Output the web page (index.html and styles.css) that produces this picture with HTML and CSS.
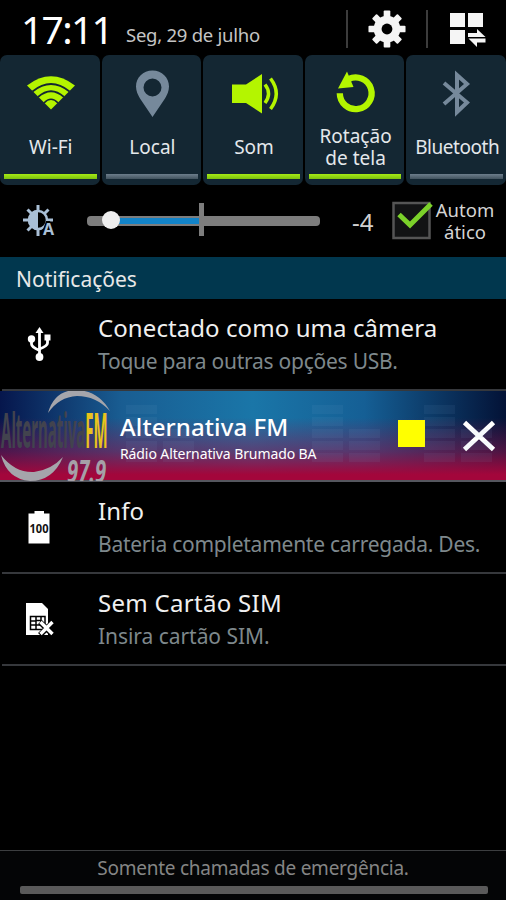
FILE: index.html
```
<!DOCTYPE html>
<html lang="pt-BR">
<head>
    <meta charset="UTF-8">
    <meta name="viewport" content="width=device-width, initial-scale=1.0">
    <title>Notificações</title>
    <link rel="stylesheet" href="styles.css">
</head>
<body>
    <header class="status">
        <span class="clock">17:11</span>
        <span class="date">Seg, 29 de julho</span>
        <div class="actions">
            <svg class="gear" width="38" height="40" viewBox="0 0 38 40">
                <g fill="#f5f5f5">
                    <rect x="15.5" y="0.5" width="7" height="39" rx="1"/>
                    <rect x="-0.5" y="16.5" width="39" height="7" rx="1"/>
                    <g transform="rotate(45 19 20)">
                        <rect x="15.5" y="1" width="7" height="38" rx="1"/>
                        <rect x="0" y="16.5" width="38" height="7" rx="1"/>
                    </g>
                    <circle cx="19" cy="20" r="14"/>
                </g>
                <circle cx="19" cy="20" r="5.7" fill="#000"/>
            </svg>
            <svg class="panels" width="36" height="36" viewBox="0 0 36 36" fill="#f5f5f5">
                <rect x="0" y="1" width="15" height="14"/>
                <rect x="18" y="1" width="15" height="14"/>
                <rect x="0" y="18" width="15" height="14"/>
                <path d="M18 25V21H27V17L35.5 25Z"/>
                <path d="M35.500 26.500V30.500H27V35L18.500 26.500Z"/>
            </svg>
        </div>
    </header>

    <section class="toggles">
        <div class="toggle on">
            <svg width="48" height="48" viewBox="0 0 48 48">
                <path fill="#b4f500" d="M25 38.500L1 14.500Q25 -4 49 14.500Z"/>
                <g fill="none" stroke="#142733" stroke-width="1.700">
                    <path d="M6.500 20.500Q25 5.500 43.500 20.500"/>
                    <path d="M12 26Q25 14.500 38 26"/>
                    <path d="M18 32Q25 24.500 32 32"/>
                </g>
            </svg>
            <div class="label">Wi-Fi</div>
        </div>
        <div class="toggle">
            <svg width="48" height="48" viewBox="0 0 48 48">
                <path fill="#76899b" fill-rule="evenodd" d="M24.500 -0.500C15 -0.500 8 6.500 8 15.500C8 20 10 24 12 27.500L24.500 46L37 27.500C39 24 41 20 41 15.500C41 6.500 34 -0.500 24.500 -0.500ZM24.500 7.500A9 9 0 1 1 24.500 25.500A9 9 0 1 1 24.500 7.500Z"/>
            </svg>
            <div class="label">Local</div>
        </div>
        <div class="toggle on">
            <svg width="48" height="48" viewBox="0 0 48 48">
                <path fill="#b4f500" d="M3 13.500H17L33 3V42.500L17 32H3Z"/>
                <g fill="none" stroke="#b4f500" stroke-width="3.500">
                    <path d="M36 13.500Q43 22.500 36 32"/>
                    <path d="M41.500 7.500Q53 22.500 41.500 38"/>
                </g>
            </svg>
            <div class="label">Som</div>
        </div>
        <div class="toggle on">
            <svg width="48" height="48" viewBox="0 0 48 48">
                <path fill="none" stroke="#b4f500" stroke-width="6.300" d="M8.800 22.300A15.900 15.900 0 1 0 17.500 8.100"/>
                <path fill="#b4f500" d="M16 0.500L22.500 16L7 17.500Z"/>
            </svg>
            <div class="label">Rotação<br>de tela</div>
        </div>
        <div class="toggle">
            <svg width="48" height="48" viewBox="0 0 48 48">
                <path fill="none" stroke="#76899b" stroke-width="4" d="M11 12L34 31.500L24 41V4L34 13L11 33"/>
            </svg>
            <div class="label tight">Bluetooth</div>
        </div>
    </section>

    <section class="brightness">
        <svg class="sun" width="34" height="34" viewBox="0 0 34 34">
            <path stroke="#a9bfd6" stroke-width="3" d="M15 1V8M0 16H8M15 24V32M24 16H30M4.500 5.500L9 10M4.500 26.500L9 22M25.500 5.500L21 10"/>
            <circle cx="15" cy="16" r="9" fill="#000" stroke="#a9bfd6" stroke-width="2.500"/>
            <path d="M15 6A10 10 0 0 0 15 26Z" fill="#a9bfd6"/>
            <path d="M17 34L23 17H27L34 34Z" fill="#000"/>
            <text class="sun-letter" x="20" y="31">A</text>
        </svg>
        <div class="slider">
            <div class="fill"></div>
            <div class="tick"></div>
            <div class="knob"></div>
        </div>
        <span class="level">-4</span>
        <svg class="check" width="42" height="40" viewBox="0 0 42 40">
            <rect x="1.500" y="2" width="36" height="35" fill="#121314" stroke="#555" stroke-width="2.500"/>
            <path d="M7 13.500L18 24L39 3" fill="none" stroke="#7bd12a" stroke-width="5"/>
        </svg>
        <span class="auto">Autom<br>ático</span>
    </section>

    <h2 class="heading">Notificações</h2>

    <main class="list">
        <div class="item">
            <div class="icon">
                <svg width="24" height="34" viewBox="0 0 24 34">
                    <path fill="none" stroke="#fff" stroke-width="2.800" d="M12.500 5V30M4.500 13V17Q4.500 20 12.500 23.500M20.500 11V16Q20.500 19 12.500 22"/>
                    <path fill="#fff" d="M12.500 0L16.500 6H8.500Z"/>
                    <circle cx="4.500" cy="12" r="3.700" fill="#fff"/>
                    <rect x="17.500" y="7.500" width="6" height="6" fill="#fff"/>
                    <circle cx="12.500" cy="30" r="3.900" fill="#fff"/>
                </svg>
            </div>
            <div class="text">
                <div class="title">Conectado como uma câmera</div>
                <div class="sub">Toque para outras opções USB.</div>
            </div>
        </div>

        <div class="radio">
            <svg class="bars" width="506" height="90" viewBox="0 0 506 90" fill="#8fb4d8">
                <g id="bar">
                    <rect x="126" y="14" width="31" height="9"/>
                    <rect x="126" y="26" width="31" height="9"/>
                    <rect x="126" y="38" width="31" height="9"/>
                    <rect x="126" y="50" width="31" height="9"/>
                    <rect x="126" y="62" width="31" height="9"/>
                    <rect x="163" y="38" width="31" height="9"/>
                    <rect x="163" y="50" width="31" height="9"/>
                    <rect x="163" y="62" width="31" height="9"/>
                </g>
                <use href="#bar" x="186"/>
                <use href="#bar" x="298"/>
            </svg>
            <svg class="logo" width="112" height="90" viewBox="0 0 112 90">
                <path fill="#a5a5ab" d="M48 22Q54 0 75 -1Q98 -1 110 20Q96 5 77 5Q59 6 48 22Z"/>
                <path fill="#a5a5ab" d="M1 64Q15 82 34 81Q51 79 63 66Q53 90 30 90Q7 88 1 64Z"/>
                <text class="logo-name" transform="translate(1 57) scale(0.750 2.400)">Alternativa<tspan class="logo-fm">FM</tspan></text>
                <text class="logo-freq" transform="translate(67 92) scale(0.880 1.420)">97.9</text>
            </svg>
            <div class="station">
                <div class="station-name">Alternativa FM</div>
                <div class="station-sub">Rádio Alternativa Brumado BA</div>
            </div>
            <div class="stop"></div>
            <svg class="close" width="34" height="32" viewBox="0 0 34 32">
                <path d="M2.500 2.500L31.500 29.500M31.500 2.500L2.500 29.500" stroke="#fff" stroke-width="4.800"/>
            </svg>
        </div>

        <div class="item">
            <div class="icon">
                <svg width="24" height="34" viewBox="0 0 24 34">
                    <path fill="#fff" d="M1.500 3.500H7.500V1H17V3.500H22.500V33.500H1.500Z"/>
                    <text class="charge" x="2.500" y="23" textLength="19" lengthAdjust="spacingAndGlyphs">100</text>
                </svg>
            </div>
            <div class="text">
                <div class="title">Info</div>
                <div class="sub">Bateria completamente carregada. Des.</div>
            </div>
        </div>

        <div class="item">
            <div class="icon">
                <svg width="28" height="34" viewBox="0 0 28 34">
                    <path fill="#fff" d="M1 1H17L23 7V33H1Z"/>
                    <path fill="none" stroke="#000" stroke-width="1.500" d="M5.500 14.500H20V27.500H5.500ZM5.500 19H11M5.500 23H11M11 14.500V27.500M11 18.500H16M11 23H15M16 14.500V21"/>
                    <path stroke="#000" stroke-width="5.500" d="M15 20L28 33M28 20L15 33"/>
                    <path stroke="#fff" stroke-width="3.400" d="M15.500 20L27.500 32M27.500 20L15.500 32"/>
                </svg>
            </div>
            <div class="text">
                <div class="title wide">Sem Cartão SIM</div>
                <div class="sub last">Insira cartão SIM.</div>
            </div>
        </div>
    </main>

    <footer class="carrier">
        <div class="carrier-text">Somente chamadas de emergência.</div>
        <div class="handle"></div>
    </footer>
</body>
</html>
```
FILE: styles.css
```
body {
    margin: 0;
    width: 506px;
    height: 900px;
    overflow: hidden;
    display: flex;
    flex-direction: column;
    background-color: #000;
    color: #e8e8e8;
    font-family: "Noto Sans", sans-serif;
    white-space: nowrap;
}
svg {
    display: block;
    overflow: visible;
    flex: none;
}

/* clock and date */
.status {
    display: flex;
    height: 55px;
    padding-left: 21px;
}
.clock {
    width: 105px;
    font-size: 39px;
    line-height: 57px;
    letter-spacing: -1.7px;
    color: #fff;
}
.date {
    font-size: 18.5px;
    line-height: 70px;
    letter-spacing: -0.25px;
    color: #c4c4c4;
}
.actions {
    display: flex;
    align-self: flex-start;
    margin-left: auto;
    padding-top: 10px;
}
.gear {
    padding: 0 20px;
    height: 38px;
    border-left: 2px solid #3c3c3c;
}
.panels {
    padding: 2px 20px 0 22px;
    border-left: 2px solid #3c3c3c;
}

/* quick settings */
.toggles {
    display: grid;
    grid-template-columns: repeat(5, 1fr);
    gap: 2px;
    height: 130px;
}
.toggle {
    display: flex;
    flex-direction: column;
    align-items: center;
    box-sizing: border-box;
    min-width: 0;
    padding: 16px 3px 6px 4px;
    border-radius: 7px;
    background-color: #142733;
}
.toggle::after {
    content: "";
    width: 100%;
    height: 5px;
    background: linear-gradient(#6d7e8c, #42535f);
}
.toggle.on::after {
    background: linear-gradient(#a6ea14, #7cc010);
}
.label {
    display: flex;
    flex: 1;
    align-items: center;
    font-size: 19px;
    line-height: 22px;
    text-align: center;
    color: #e4e8ec;
    padding: 1px 0 0 1px;
}
.tight {
    letter-spacing: -0.45px;
}

/* brightness */
.brightness {
    display: flex;
    align-items: center;
    height: 72px;
}
.sun {
    margin-left: 23px;
}
.sun-letter {
    font-size: 16px;
    font-weight: bold;
    fill: #a9bfd6;
}
.slider {
    position: relative;
    width: 233px;
    height: 10px;
    margin-left: 30px;
    border-radius: 4px;
    background-color: #7d7d7d;
}
.fill {
    position: absolute;
    left: 24px;
    top: 2px;
    width: 90px;
    height: 6px;
    background-color: #1283c8;
}
.tick {
    position: absolute;
    left: 112px;
    top: -13px;
    width: 5px;
    height: 33px;
    background-color: #7d7d7d;
}
.knob {
    position: absolute;
    left: 15px;
    top: -5px;
    width: 18px;
    height: 18px;
    border-radius: 50%;
    background-color: #eee;
}
.level {
    width: 24px;
    margin-left: 32px;
    font-size: 24px;
    color: #d0d0d0;
}
.check {
    margin-left: 16px;
}
.auto {
    width: 60px;
    padding-left: 1px;
    font-size: 18.5px;
    line-height: 22px;
    text-align: center;
    color: #d4d4d4;
}

/* notifications */
.heading {
    margin: 0;
    height: 42px;
    padding-left: 16px;
    font-size: 21px;
    font-weight: normal;
    line-height: 45px;
    background-color: #01374e;
}
.item {
    display: flex;
    height: 90px;
    margin-left: 2px;
    border-bottom: 2px solid #36383c;
}
.icon {
    display: flex;
    justify-content: center;
    align-items: center;
    width: 74px;
    margin-right: 22px;
}
.text {
    padding-top: 12px;
}
.title {
    font-size: 24px;
    letter-spacing: 0.08px;
    line-height: 34px;
    color: #f0f0f0;
}
.title.wide {
    letter-spacing: 0.3px;
}
.sub {
    font-size: 21px;
    letter-spacing: -0.25px;
    line-height: 32px;
    color: #7e888c;
}
.sub.last {
    letter-spacing: -0.05px;
}
.radio {
    position: relative;
    display: flex;
    height: 89px;
    border-bottom: 2px solid #55565e;
    background: linear-gradient(to bottom, transparent 30%, rgba(140, 20, 75, 0.55) 68%, #a3063b 94%),
        linear-gradient(to right, #06164c, #195d92 24%, #1a76a8 50%, #155f95 72%, #031236);
}
.logo {
    position: relative;
    overflow: hidden;
}
.logo-name {
    font-size: 20px;
    font-weight: bold;
    fill: #42434e;
}
.logo-fm {
    fill: #eac31c;
}
.logo-freq {
    font-size: 23px;
    font-weight: bold;
    font-style: italic;
    fill: #a5a0a8;
}
.station {
    position: relative;
    width: 286px;
    padding: 19px 0 0 8px;
    box-sizing: border-box;
    color: #fff;
}
.station-name {
    font-size: 24px;
    font-weight: 500;
    letter-spacing: 0.1px;
    line-height: 34px;
}
.station-sub {
    font-size: 14px;
    letter-spacing: -0.1px;
    line-height: 19px;
}
.stop {
    width: 27px;
    height: 27px;
    margin-top: 29px;
    background-color: #ff0;
}
.close {
    margin: 29px 0 0 37px;
}
.bars {
    position: absolute;
    left: 0;
    top: 0;
    opacity: 0.07;
}
.charge {
    font-size: 12px;
    font-weight: bold;
    fill: #111;
}

/* carrier footer */
.carrier {
    margin-top: auto;
    height: 49px;
    border-top: 1px solid #3c3e40;
    background-color: #040506;
}
.carrier-text {
    font-size: 19px;
    letter-spacing: -0.25px;
    line-height: 35px;
    text-align: center;
    color: #858585;
}
.handle {
    width: 468px;
    height: 8px;
    margin-left: 20px;
    border-radius: 2px;
    background-color: #5a5a5a;
}
```
